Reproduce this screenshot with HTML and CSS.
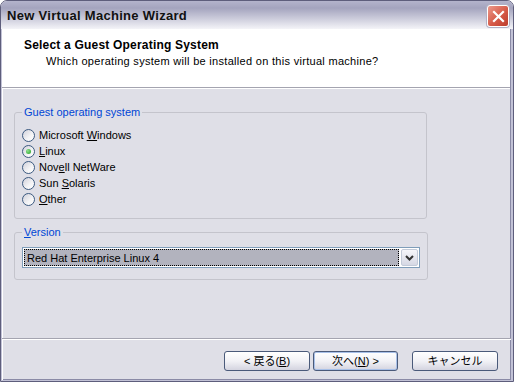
FILE: index.html
```html
<!DOCTYPE html>
<html lang="en">

<head>
    <meta charset="UTF-8">
    <title>New Virtual Machine Wizard</title>
    <link rel="stylesheet" href="styles.css">
</head>

<body>
    <div class="window">
        <!-- title bar -->
        <div class="titlebar">
            <span class="title">New Virtual Machine Wizard</span>
            <span class="close">
                <svg width="13" height="13" viewBox="0 0 13 13">
                    <path d="M2 2 L11 11 M11 2 L2 11" stroke="#fff" stroke-width="2.2" stroke-linecap="square" />
                </svg>
            </span>
        </div>

        <div class="frame">
            <!-- header -->
            <div class="header">
                <div class="header-title">Select a Guest Operating System</div>
                <div class="header-sub">Which operating system will be installed on this virtual machine?</div>
            </div>

            <!-- page body -->
            <div class="content">
                <fieldset class="group os-group">
                    <legend>Guest operating system</legend>
                    <div class="radio"><span class="dot"></span><span>Microsoft <u>W</u>indows</span></div>
                    <div class="radio checked"><span class="dot"></span><span><u>L</u>inux</span></div>
                    <div class="radio"><span class="dot"></span><span>Nov<u>e</u>ll NetWare</span></div>
                    <div class="radio"><span class="dot"></span><span>Sun <u>S</u>olaris</span></div>
                    <div class="radio"><span class="dot"></span><span><u>O</u>ther</span></div>
                </fieldset>

                <fieldset class="group version-group">
                    <legend><u>V</u>ersion</legend>
                    <div class="combo">
                        <div class="combo-value"><span>Red Hat Enterprise Linux 4</span></div>
                        <div class="combo-btn">
                            <svg width="9" height="6" viewBox="0 0 9 6">
                                <path d="M1 1 L4.5 4.5 L8 1" fill="none" stroke="#333" stroke-width="2" />
                            </svg>
                        </div>
                    </div>
                </fieldset>
            </div>

            <!-- buttons -->
            <div class="footer">
                <button class="btn">&lt; 戻る(<u>B</u>)</button>
                <button class="btn default">次へ(<u>N</u>) &gt;</button>
                <button class="btn cancel">キャンセル</button>
            </div>
        </div>
    </div>
</body>

</html>
```

FILE: styles.css
```css
/* general */

body {
    margin: 0;
    background: #fff;
    font-family: 'Liberation Sans', 'Noto Sans CJK JP', sans-serif;
    font-size: 11px;
    color: #000;
}

.window {
    width: 514px;
    height: 382px;
    box-sizing: border-box;
    display: flex;
    flex-direction: column;
    border: 1px solid #5e5e7c;
    border-radius: 7px 7px 0 0;
    background: #dfdfe7;
    overflow: hidden;
}

/* title bar */

.titlebar {
    height: 28px;
    flex-shrink: 0;
    display: flex;
    align-items: center;
    justify-content: space-between;
    padding: 0 4px 0 6px;
    background: linear-gradient(#b4b4cc, #a4a4be 25%, #c9c9d9 60%, #f4f4f8);
}

.title {
    font-weight: bold;
    font-size: 13px;
    color: #111;
    letter-spacing: 0.3px;
}

.close {
    width: 20px;
    height: 20px;
    margin-top: 2px;
    border: 1px solid #fff;
    border-radius: 3px;
    background: linear-gradient(135deg, #ec9a8c, #d65a48 55%, #bc3c2c);
    display: flex;
    align-items: center;
    justify-content: center;
    box-shadow: 0 0 0 1px #b0b0c4;
}

.frame {
    flex: 1;
    display: flex;
    flex-direction: column;
    border: 2px solid #c2c2d6;
    border-top: 0;
    border-left-width: 1px;
    border-bottom-width: 1px;
    box-shadow: inset 1px 0 #fff, inset -1px 0 #8a8aa6, inset 0 -1px #8a8aa6;
}

/* header */

.header {
    height: 59px;
    flex-shrink: 0;
    background: #fff;
    border-bottom: 1px solid #a4a4b0;
    box-shadow: 0 1px #fff;
    padding: 9px 0 0 22px;
    box-sizing: border-box;
    margin-right: 1px;
}

.header-title {
    font-weight: bold;
    font-size: 12px;
    letter-spacing: 0.2px;
}

.header-sub {
    margin: 3px 0 0 22px;
    letter-spacing: 0.3px;
}

/* group boxes */

.content {
    flex: 1;
    padding: 18px 0 0 12px;
}

.group {
    width: 413px;
    box-sizing: border-box;
    margin: 0;
    padding: 8px 7px 11px;
    border: 1px solid #c4c4cc;
    border-radius: 3px;
}

.group legend {
    color: #0046d5;
    padding: 0 2px;
    line-height: 13px;
}

.version-group {
    margin-top: 7px;
    padding-top: 8px;
}

.radio {
    height: 16px;
    display: flex;
    align-items: center;
    gap: 4px;
}

.dot {
    width: 11px;
    height: 11px;
    border: 1px solid #3c5a80;
    border-radius: 50%;
    background: linear-gradient(135deg, #d0d0da, #f4f4f6 60%, #fff);
    display: flex;
    align-items: center;
    justify-content: center;
}

.checked .dot::after {
    content: "";
    width: 5px;
    height: 5px;
    border-radius: 50%;
    background: radial-gradient(circle at 35% 35%, #8ee08e, #21a121);
}

/* combo box */

.combo {
    width: 398px;
    height: 21px;
    box-sizing: border-box;
    border: 1px solid #7f9db9;
    background: #fff;
    display: flex;
    padding: 1px;
    gap: 2px;
}

.combo-value {
    flex: 1;
    background: #b2b3be;
    outline: 1px dotted #000;
    outline-offset: -1px;
    display: flex;
    align-items: center;
    padding-left: 3px;
    font-size: 11px;
}

.combo-btn {
    width: 17px;
    border: 1px solid #c3cad8;
    border-radius: 2px;
    box-sizing: border-box;
    background: linear-gradient(#f6f6fa, #d6d8e4);
    display: flex;
    align-items: center;
    justify-content: center;
}

/* footer */

.footer {
    height: 42px;
    flex-shrink: 0;
    box-sizing: border-box;
    border-top: 1px solid #a4a4b0;
    box-shadow: inset 0 1px #fff;
    display: flex;
    justify-content: flex-end;
    align-items: flex-start;
    padding: 12px 13px 0 0;
}

.btn {
    width: 86px;
    height: 20px;
    margin: 0;
    padding: 0;
    border: 1px solid #4a5a7a;
    border-radius: 3px;
    background: linear-gradient(#ffffff, #f2f2f6 50%, #d4d4e0);
    font-family: 'Liberation Sans', 'Noto Sans CJK JP', sans-serif;
    font-size: 11px;
    color: #000;
    line-height: 16px;
}

.default {
    width: 85px;
    margin-left: 3px;
    box-shadow: inset 0 0 0 1px #a8c0e8;
}

.cancel {
    margin-left: 14px;
}
```
